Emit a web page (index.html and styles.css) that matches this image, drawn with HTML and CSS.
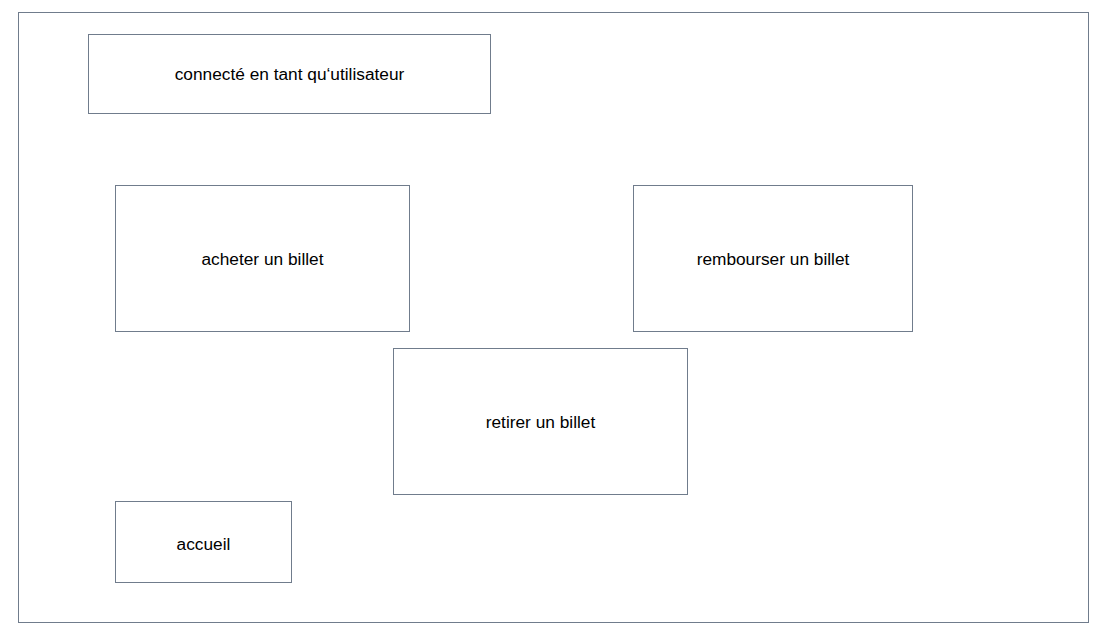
FILE: index.html
```html
<!DOCTYPE html>
<html lang="fr">
<head>
<meta charset="utf-8">
<title>Menu utilisateur</title>
<link rel="stylesheet" href="styles.css">
</head>
<body>
<div class="frame">
  <div class="row row-status">
    <div class="box box-status">connecté en tant qu‘utilisateur</div>
  </div>
  <div class="row row-actions">
    <div class="box box-buy">acheter un billet</div>
    <div class="box box-refund">rembourser un billet</div>
  </div>
  <div class="row row-withdraw">
    <div class="box box-withdraw">retirer un billet</div>
  </div>
  <div class="row row-home">
    <div class="box box-home">accueil</div>
  </div>
</div>
</body>
</html>
```
FILE: styles.css
```css
html, body {
  margin: 0;
  padding: 0;
  background: #ffffff;
}
body {
  font-family: "Liberation Sans", Arial, sans-serif;
  font-size: 17.3px;
  color: #000000;
}
.frame {
  box-sizing: border-box;
  margin: 12px 0 0 18px;
  width: 1071px;
  height: 611px;
  border: 1px solid #707c8c;
  display: flex;
  flex-direction: column;
}
.row {
  display: flex;
}
.box {
  box-sizing: border-box;
  border: 1px solid #707c8c;
  display: flex;
  align-items: center;
  justify-content: center;
  padding-top: 2px;
  background: #ffffff;
}
.row-status {
  margin-top: 21px;
  padding-left: 69px;
}
.box-status {
  width: 403px;
  height: 80px;
  padding-top: 0;
}
.row-actions {
  margin-top: 71px;
  padding-left: 96px;
}
.box-buy {
  width: 295px;
  height: 147px;
}
.box-refund {
  margin-left: 223px;
  width: 280px;
  height: 147px;
}
.row-withdraw {
  margin-top: 16px;
  padding-left: 374px;
}
.box-withdraw {
  width: 295px;
  height: 147px;
}
.row-home {
  margin-top: 6px;
  padding-left: 96px;
}
.box-home {
  width: 177px;
  height: 82px;
  padding-top: 4px;
}
```
